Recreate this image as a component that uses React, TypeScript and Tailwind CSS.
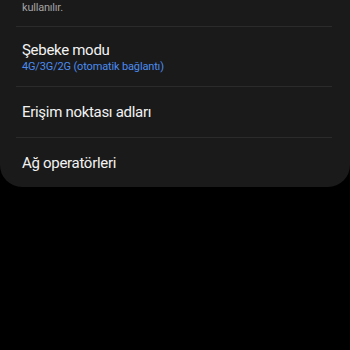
export default function App() {
  const font = { fontFamily: 'Roboto, "Noto Sans", sans-serif' };

  return (
    <div className="w-[350px] h-[350px] bg-black overflow-hidden" style={font}>
      <div className="bg-[#1a1a1a] rounded-b-[22px] overflow-hidden">
        {/* Description tail of the previous item */}
        <div className="px-[22px] -mt-4 pb-[10px]">
          <p className="text-[11px] leading-[16px] tracking-[-0.2px] text-[#a3a3a3] whitespace-nowrap">
            Mümkün olduğunda sesli ve diğer iletişimleri iyileştirmek için LTE
            <br />
            kullanılır.
          </p>
        </div>
        <div className="h-px bg-[#2b2b2b] ml-4 mr-[18px]" />

        {/* Network mode */}
        <div className="px-[22px] pt-[13px] pb-[12px]">
          <div className="text-[15px] leading-[20px] tracking-[-0.3px] text-[#f2f2f2]">Şebeke modu</div>
          <div className="text-[11px] leading-[14px] tracking-[-0.15px] text-[#4a8cf0]">
            4G/3G/2G (otomatik bağlantı)
          </div>
        </div>
        <div className="h-px bg-[#2b2b2b] ml-4 mr-[18px]" />

        <div className="h-[50px] px-[22px] flex items-center">
          <span className="text-[15px] leading-[20px] tracking-[-0.3px] text-[#f2f2f2]">
            Erişim noktası adları
          </span>
        </div>
        <div className="h-px bg-[#2b2b2b] ml-4 mr-[18px]" />

        <div className="h-[49px] px-[22px] flex items-center">
          <span className="text-[15px] leading-[20px] tracking-[-0.3px] text-[#f2f2f2]">
            Ağ operatörleri
          </span>
        </div>
      </div>
    </div>
  );
}
